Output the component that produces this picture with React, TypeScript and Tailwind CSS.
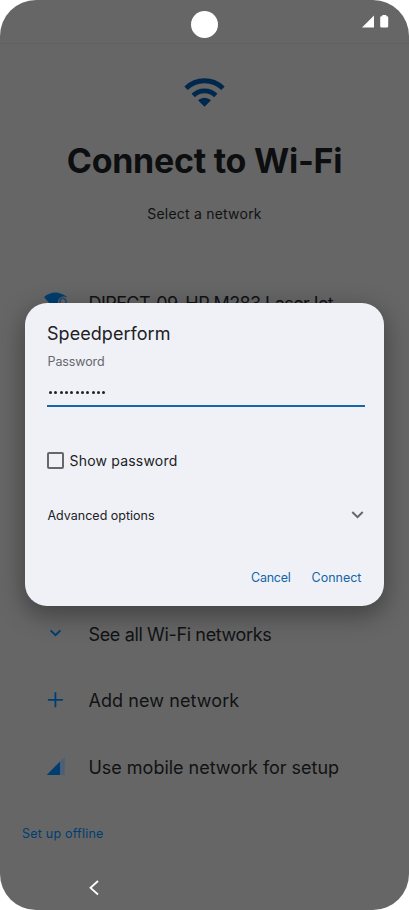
import React from "react";

const networks = [
  { label: "See all Wi-Fi networks", icon: "chevron", cls: "tracking-[-0.36px]" },
  { label: "Add new network", icon: "plus", cls: "tracking-[0.08px]" },
  { label: "Use mobile network for setup", icon: "signal", cls: "tracking-[-0.02px]" },
];

function RowIcon({ name }: { name: string }) {
  if (name === "chevron")
    return (
      <svg width="24" height="24" viewBox="0 0 24 24" fill="none" stroke="#003e70" strokeWidth="2">
        <path d="M7.600 8.400l4.900 4.800 4.900-4.800" />
      </svg>
    );
  if (name === "plus")
    return (
      <svg width="24" height="24" viewBox="0 0 24 24" fill="none" stroke="#003e70" strokeWidth="1.800">
        <path d="M12.400 3.300v15M4.900 10.800h15" />
      </svg>
    );
  return (
    <svg width="24" height="24" viewBox="0 0 24 24">
      <path d="M21.700 2v18H3.700z" fill="#4b6078" />
      <path d="M17 6.500v13.500H3.700z" fill="#003e70" />
    </svg>
  );
}

export default function App() {
  return (
    <div className="relative h-[910px] w-[409px] overflow-hidden bg-white font-['Inter',sans-serif]">
      <div className="flex h-full flex-col overflow-hidden rounded-[36px] bg-[#666666] text-[#111213]">
        <header className="flex h-[44px] shrink-0 justify-between border-b border-[#606060] pl-[191px] pr-[20px]">
          <div className="mt-[10.500px] size-[27px] rounded-full bg-white" />
          <svg className="mt-[14px]" width="28" height="15" viewBox="0 0 28 15" fill="white">
            <path d="M13 1.500v12H1z" />
            <path d="M19.200 3.500q0-1.200 1.200-1.200h.9V1h4v1.300h.9q1 0 1 1.200v8.800q0 1.200-1.200 1.200h-5.500q-1.300 0-1.300-1.200z" />
          </svg>
        </header>
        <svg className="ml-[184px] mt-[33px] shrink-0" width="41" height="31" viewBox="0 0 41 31">
          <g fill="none" stroke="#00284c" strokeWidth="4.800">
            <path d="M2 11.300a26.500 26.500 0 0 1 37 0" />
            <path d="M9.200 18.500a16.200 16.200 0 0 1 22.600 0" />
          </g>
          <path d="M14 23.300a9.400 9.400 0 0 1 13 0l-6.500 6.400z" fill="#00284c" />
        </svg>
        <h1 className="mt-[33px] w-full whitespace-nowrap text-center text-[34px] font-bold leading-[40px] tracking-[-0.26px] text-[#0c0e10]">Connect to Wi-Fi</h1>
        <p className="mt-[23px] text-center text-[14px] leading-[20px] tracking-[0.22px]">Select a network</p>
        <div className="mt-[66px] flex h-[24px] shrink-0 items-center">
          <svg className="ml-[43px] w-[26px]" height="24" viewBox="0 0 26 24">
            <path d="M1 7q11-9 23 0l-11 14z" fill="#003e70" />
            <path d="M15 17v-4a5.500 5.500 0 0 1 9-5v9z" fill="#666666" />
            <path d="M17.500 13a3 3 0 1 1 5 0" fill="none" stroke="#23496b" strokeWidth="1.600" />
          </svg>
          <span className="ml-[19.500px] mt-[2px] whitespace-nowrap text-[18px] tracking-[-0.59px]">DIRECT-09-HP M283 LaserJet</span>
        </div>
        <main className="mt-[308px] flex flex-col gap-[42.500px]">
          {networks.map((n) => (
            <div key={n.label} className="flex h-[24px] items-center pl-[43px]">
              <RowIcon name={n.icon} />
              <span className={"ml-[21.500px] whitespace-nowrap text-[18px] " + n.cls}>{n.label}</span>
            </div>
          ))}
        </main>
        <button className="ml-[22px] mt-[45px] self-start whitespace-nowrap text-[12.500px] leading-[20px] tracking-[0.22px] text-[#003e70]">Set up offline</button>
        <svg className="ml-[87px] mt-[36px] shrink-0" width="14" height="16" viewBox="0 0 14 16" fill="none" stroke="white" strokeWidth="1.800">
          <path d="M11 1L3.500 7.800 11 14.500" />
        </svg>
      </div>

      <section className="absolute left-[25px] top-[303px] flex h-[302.500px] w-[358.700px] flex-col rounded-[22px] bg-[#f0f1f7] px-[22px] text-[#202124] shadow-[0_8px_24px_2px_rgba(0,0,0,0.35)]">
        <h2 className="mt-[19px] whitespace-nowrap text-[18px] leading-[24px] tracking-[0.05px]">Speedperform</h2>
        <label className="mt-[8px] pl-[0.500px] text-[12.500px] leading-[16px] tracking-[-0.1px] text-[#66676b]">Password</label>
        <div className="mt-[8px] flex h-[29px] w-[318px] items-center gap-[2.350px] border-b-2 border-[#1467aa] pl-[2px] pt-[2px]">
          {Array.from({ length: 11 }, (_, i) => (
            <span key={i} className="size-[3px] rounded-full bg-[#202124]" />
          ))}
        </div>
        <div className="mt-[42px] flex h-[22px] items-center">
          <span className="ml-[-0.500px] size-[17px] rounded-[2px] border-2 border-[#66666b]" />
          <span className="ml-[6px] mt-[1px] whitespace-nowrap text-[14px] tracking-[0.2px]">Show password</span>
        </div>
        <div className="mt-[33px] flex h-[22px] items-center justify-between">
          <span className="mt-[2px] whitespace-nowrap pl-[0.500px] text-[12.500px]">Advanced options</span>
          <svg className="mr-[-3px]" width="16" height="12" viewBox="0 0 16 12" fill="none" stroke="#66666a" strokeWidth="2">
            <path d="M3.300 3L8.500 8.200l5.200-5.200" />
          </svg>
        </div>
        <div className="mt-[41px] flex gap-[21px] pl-[204px] text-[12.500px] leading-[22px] text-[#1265a8]">
          <button className="w-[39.500px] whitespace-nowrap text-left tracking-[-0.25px]">Cancel</button>
          <button className="whitespace-nowrap">Connect</button>
        </div>
      </section>
    </div>
  );
}
